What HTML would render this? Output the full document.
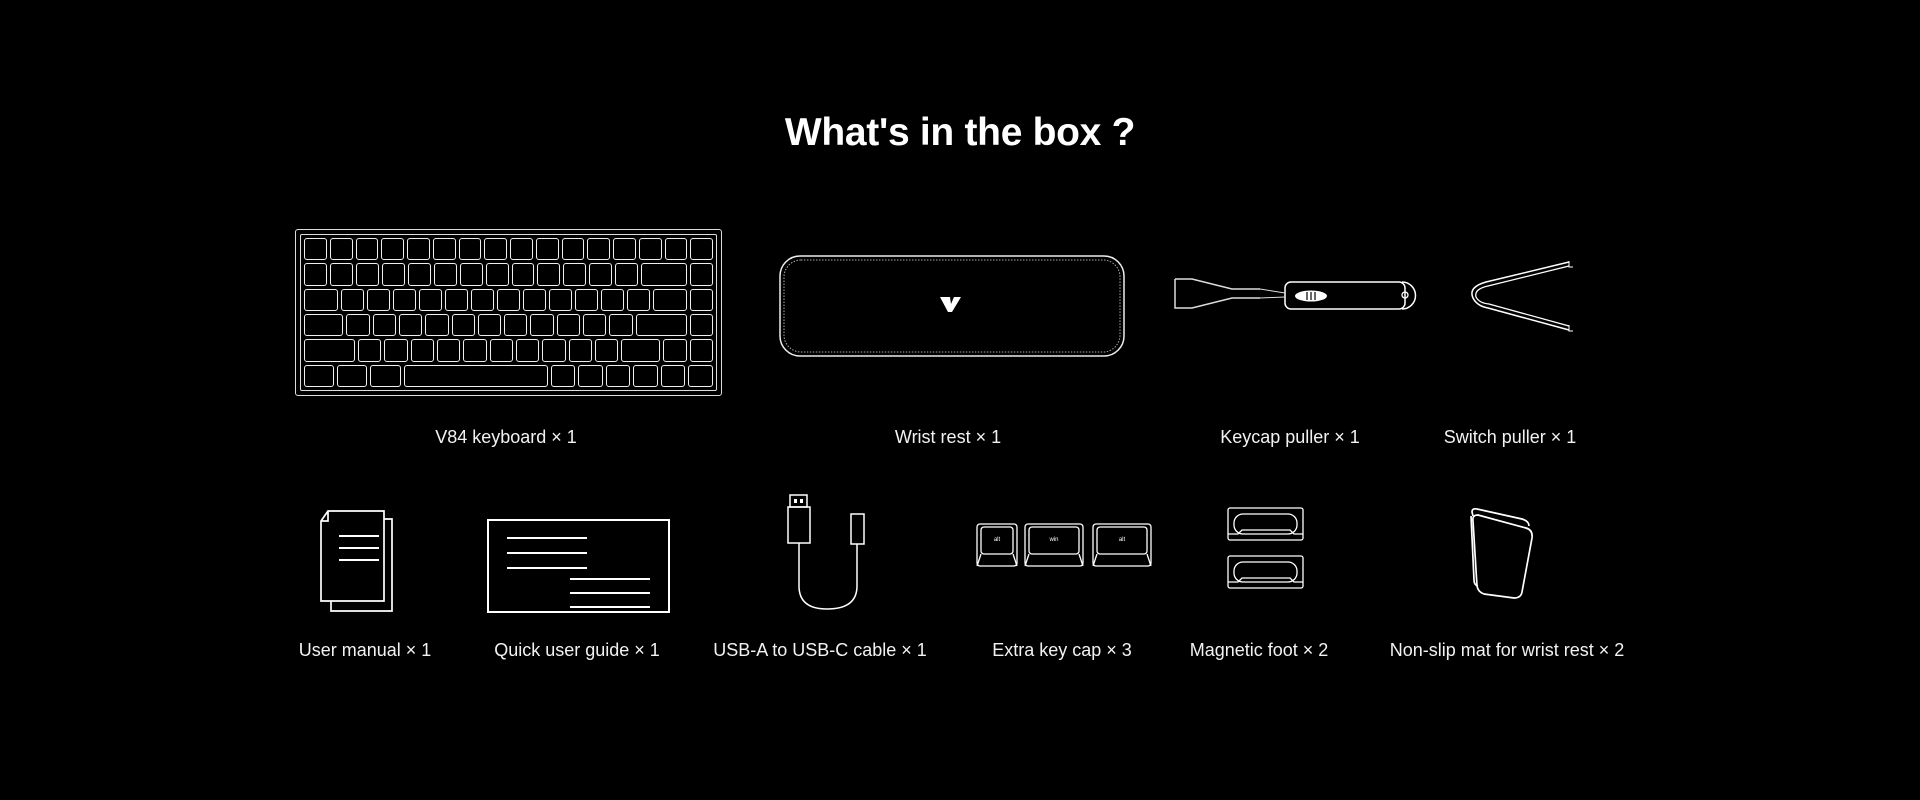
<!DOCTYPE html>
<html><head><meta charset="utf-8"><style>
*{margin:0;padding:0;box-sizing:border-box}
body{width:1920px;height:800px;background:#000;position:relative;overflow:hidden;font-family:"Liberation Sans",sans-serif;color:#fff}
.t{position:absolute;left:0;width:1920px;top:111px;text-align:center;font-size:39px;font-weight:bold;letter-spacing:-0.3px}
.l{position:absolute;font-size:18px;transform:translateX(-50%);white-space:nowrap;color:#f2f2f2}
.kb{position:absolute;left:295px;top:229px;width:427px;height:167px;border:1.5px solid #ddd;border-radius:3px;padding:4px}
.kbi{width:100%;height:100%;border:1.5px solid #ddd;border-radius:2px;padding:3px 3px;display:flex;flex-direction:column;gap:3px}
.r{flex:1;display:flex;gap:3px}
.r i{flex:1;border:1.3px solid #eee;border-radius:3px;display:block}
svg{position:absolute}
</style></head><body>
<div class="t">What's in the box ?</div>

<div class="kb"><div class="kbi">
<div class="r"><i></i><i></i><i></i><i></i><i></i><i></i><i></i><i></i><i></i><i></i><i></i><i></i><i></i><i></i><i></i><i></i></div>
<div class="r"><i></i><i></i><i></i><i></i><i></i><i></i><i></i><i></i><i></i><i></i><i></i><i></i><i></i><i style="flex:2.1"></i><i></i></div>
<div class="r"><i style="flex:1.5"></i><i></i><i></i><i></i><i></i><i></i><i></i><i></i><i></i><i></i><i></i><i></i><i></i><i style="flex:1.5"></i><i></i></div>
<div class="r"><i style="flex:1.75"></i><i></i><i></i><i></i><i></i><i></i><i></i><i></i><i></i><i></i><i></i><i></i><i style="flex:2.3"></i><i></i></div>
<div class="r"><i style="flex:2.3"></i><i></i><i></i><i></i><i></i><i></i><i></i><i></i><i></i><i></i><i></i><i style="flex:1.75"></i><i></i><i></i></div>
<div class="r"><i style="flex:1.25"></i><i style="flex:1.25"></i><i style="flex:1.25"></i><i style="flex:6.3;position:relative"></i><i></i><i></i><i></i><i></i><i></i><i></i></div>
</div></div>

<svg style="left:778px;top:254px" width="348" height="104" viewBox="0 0 348 104">
<rect x="2" y="2" width="344" height="100" rx="20" fill="none" stroke="#eee" stroke-width="1.5"/>
<rect x="6" y="6" width="336" height="92" rx="17" fill="none" stroke="#aaa" stroke-width="1" stroke-dasharray="1.5 1.5"/>
<path d="M162 43 L172 43 L173 50 L176 43 L183 43 L174 58 L170 58 Z" fill="#fff"/>
</svg>

<svg style="left:1172px;top:275px" width="245" height="40" viewBox="0 0 245 40">
<path d="M3 4 H20 L60 14 H88 M3 4 V33 H20 L60 23 H88" fill="none" stroke="#ddd" stroke-width="1.5"/>
<rect x="113" y="7" width="120" height="27" rx="6" fill="none" stroke="#fff" stroke-width="1.5"/>
<path d="M230 7 A13.5 13.5 0 0 1 230 34" fill="none" stroke="#fff" stroke-width="1.5"/>
<line x1="88" y1="14" x2="113" y2="18" stroke="#ddd"/><line x1="88" y1="23" x2="113" y2="22" stroke="#ddd"/>
<circle cx="233" cy="20" r="3" fill="none" stroke="#fff" stroke-width="1.3"/>
<ellipse cx="139" cy="21" rx="16" ry="5.5" fill="#fff"/>
<path d="M135 17v8M139 17v8M143 17v8" stroke="#000" stroke-width="1.2"/>
</svg>

<svg style="left:1464px;top:256px" width="115" height="78" viewBox="0 0 115 78">
<path d="M105 6 L22 26 Q4 31 9 42 Q13 50 24 52 L105 74" fill="none" stroke="#fff" stroke-width="1.5"/>
<path d="M105 10 L24 30 Q10 33 12 41 Q15 47 25 48 L105 70" fill="none" stroke="#fff" stroke-width="1.3"/>
<path d="M105 5v6h4M105 69v6h4" fill="none" stroke="#fff" stroke-width="1"/>
</svg>

<svg style="left:318px;top:508px" width="90" height="110" viewBox="0 0 90 110">
<path d="M10 3 H66 V93 H3 V13 Z M3 13 H10 V3" fill="none" stroke="#fff" stroke-width="1.7"/>
<path d="M66 11 H74 V103 H13 V93" fill="none" stroke="#fff" stroke-width="1.7"/>
<path d="M21 28h40M21 40h40M21 52h40" stroke="#fff" stroke-width="2"/>
</svg>

<svg style="left:486px;top:517px" width="186" height="98" viewBox="0 0 186 98">
<rect x="2" y="3" width="181" height="92" fill="none" stroke="#fff" stroke-width="2"/>
<path d="M21 21h80M21 36h80M21 51h80M84 62h80M84 76h80M84 90h80" stroke="#fff" stroke-width="2"/>
</svg>

<svg style="left:785px;top:492px" width="90" height="120" viewBox="0 0 90 120">
<rect x="5" y="3" width="17" height="12" fill="none" stroke="#fff" stroke-width="1.5"/>
<path d="M9 7h3v4H9zM15 7h3v4h-3z" fill="#fff"/>
<rect x="3" y="15" width="22" height="36" fill="none" stroke="#fff" stroke-width="1.5"/>
<rect x="66" y="22" width="13" height="30" fill="none" stroke="#fff" stroke-width="1.5"/>
<path d="M14 51 V94 Q14 117 42 117 Q72 117 72 94 V52" fill="none" stroke="#fff" stroke-width="1.5"/>
</svg>

<svg style="left:975px;top:522px" width="180" height="46" viewBox="0 0 180 46">
<g fill="none" stroke="#fff" stroke-width="1.3">
<rect x="2" y="2" width="40" height="42" rx="3"/><rect x="6" y="5" width="32" height="27" rx="3"/><path d="M6 32 L2 44 M38 32 L42 44"/>
<rect x="50" y="2" width="58" height="42" rx="3"/><rect x="54" y="5" width="50" height="27" rx="3"/><path d="M54 32 L50 44 M104 32 L108 44"/>
<rect x="118" y="2" width="58" height="42" rx="3"/><rect x="122" y="5" width="50" height="27" rx="3"/><path d="M122 32 L118 44 M172 32 L176 44"/>
</g>
<text x="22" y="19" font-size="6" fill="#fff" text-anchor="middle">alt</text>
<text x="79" y="19" font-size="6" fill="#fff" text-anchor="middle">win</text>
<text x="147" y="19" font-size="6" fill="#fff" text-anchor="middle">alt</text>
</svg>

<svg style="left:1226px;top:506px" width="80" height="86" viewBox="0 0 80 86">
<g fill="none" stroke="#fff" stroke-width="1.3">
<rect x="2" y="2" width="75" height="32" rx="2"/><rect x="8" y="8" width="63" height="20" rx="9"/><path d="M2 28h10l4-4h48l4 4h9"/>
<rect x="2" y="50" width="75" height="32" rx="2"/><rect x="8" y="56" width="63" height="20" rx="9"/><path d="M2 76h10l4-4h48l4 4h9"/>
</g></svg>

<svg style="left:1464px;top:506px" width="80" height="94" viewBox="0 0 80 94">
<g fill="none" stroke="#fff" stroke-width="1.7">
<path d="M9 10 L8 6 Q8 2 13 3 L58 13 Q65 15 65 20"/>
<path d="M7 10 L10 74 Q10 79 14 80"/>
<path d="M14 9 Q8 9 9 15 L13 80 Q14 86 20 88 L50 92 Q57 92 58 86 L68 32 Q69 24 62 22 Z"/>
</g></svg>

<div class="l" style="left:506px;top:427px">V84 keyboard × 1</div>
<div class="l" style="left:948px;top:427px">Wrist rest × 1</div>
<div class="l" style="left:1290px;top:427px">Keycap puller × 1</div>
<div class="l" style="left:1510px;top:427px">Switch puller × 1</div>
<div class="l" style="left:365px;top:640px">User manual × 1</div>
<div class="l" style="left:577px;top:640px">Quick user guide × 1</div>
<div class="l" style="left:820px;top:640px">USB-A to USB-C cable × 1</div>
<div class="l" style="left:1062px;top:640px">Extra key cap × 3</div>
<div class="l" style="left:1259px;top:640px">Magnetic foot × 2</div>
<div class="l" style="left:1507px;top:640px">Non-slip mat for wrist rest × 2</div>
</body></html>
